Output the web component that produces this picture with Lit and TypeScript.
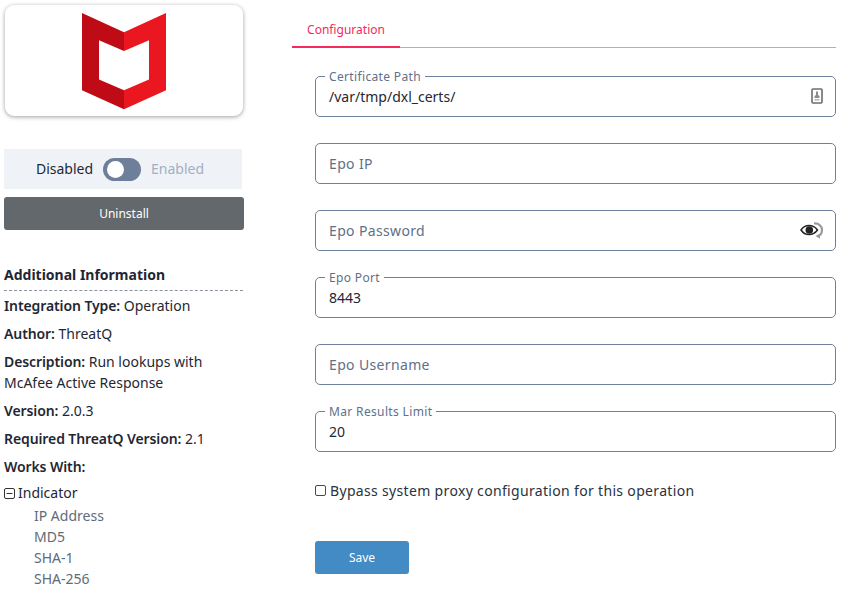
import { LitElement, html, css, nothing } from "lit";
import { customElement } from "lit/decorators.js";

interface Field { label: string; value?: string; icon?: "file" | "eye"; }

const FIELDS: Field[] = [
  { label: "Certificate Path", value: "/var/tmp/dxl_certs/", icon: "file" },
  { label: "Epo IP" },
  { label: "Epo Password", icon: "eye" },
  { label: "Epo Port", value: "8443" },
  { label: "Epo Username" },
  { label: "Mar Results Limit", value: "20" },
];

@customElement("app-root")
export class AppRoot extends LitElement {
  static styles = css`
    :host {
      display: block; width: 846px; height: 593px; overflow: hidden; background: #fff;
      font-family: "Noto Sans", "Open Sans", sans-serif; color: #1f2733;
    }
    .page { display: flex; align-items: flex-start; padding: 5px 10px 0 4px; }
    .left { width: 240px; flex: none; }
    .right { width: 544px; flex: none; margin-left: 48px; }

    .card {
      margin-left: 1px; width: 238px; height: 111px; box-sizing: border-box; background: #fff;
      border-radius: 9px; box-shadow: 0 1px 4px rgba(0,0,0,.38);
      display: flex; align-items: center; justify-content: center; padding-top: 2px;
    }
    .card svg { display: block; }

    .toggle-row {
      margin-top: 33px; width: 238px; height: 40px; background: #eff3f8; box-sizing: border-box;
      display: flex; align-items: center; justify-content: center; gap: 10px;
      font-size: 14px; padding: 0 6px 2px 0;
    }
    .toggle-row .on { color: #a3aec2; }
    .switch { width: 38px; height: 23px; border-radius: 12px; background: #6e7f99; display: flex; align-items: center; padding-left: 4px; box-sizing: border-box; margin-top: 2px; }
    .knob { width: 17px; height: 17px; border-radius: 50%; background: #fff; }
    .uninstall {
      margin-top: 8px; height: 33px; border-radius: 3px; background: #62686b; color: #fff;
      display: flex; align-items: center; justify-content: center; font-size: 12px;
    }

    .info { margin-top: 34px; font-size: 14px; line-height: 21px; color: #1f2733; }
    .info h3 {
      margin: 0; font-size: 14px; font-weight: 700; line-height: 21px; padding-bottom: 5px;
      border-bottom: 1px dashed #8c939c; margin-right: 1px;
    }
    .info p { margin: 0; padding-top: 7px; }
    .info h3 + p { padding-top: 4px; }
    .info b { font-weight: 600; letter-spacing: -.1px; }
    .tree-head { display: flex; align-items: center; gap: 3px; margin-top: 5px; height: 21px; }
    .tree-head svg { display: block; margin-top: 2px; }
    .tree { list-style: none; margin: 2px 0 0; padding: 0 0 0 30px; color: #5f6b7a; }

    .tabs { height: 42px; border-bottom: 1px solid #aab2c0; display: flex; align-items: flex-end; }
    .tab {
      width: 108px; height: 27px; box-sizing: border-box; margin-bottom: -1px;
      border-bottom: 2px solid #f5295a; color: #f5295a; font-size: 12px;
      display: flex; justify-content: center;
    }

    form { margin: 28px 0 0 23px; display: flex; flex-direction: column; gap: 26px; }
    .field {
      position: relative; height: 41px; box-sizing: border-box; border: 1px solid #6e7f99; border-radius: 5px;
      display: flex; align-items: center; padding: 0 11px 0 13px; font-size: 14px; color: #1f2733;
    }
    .field .val { flex: 1; }
    .field .ph { flex: 1; color: #5f708a; letter-spacing: .35px; }
    .field.filled { align-items: flex-start; padding-top: 10px; }
    .legend {
      position: absolute; left: 9px; top: -8px; padding: 0 4px; background: #fff;
      font-size: 12px; line-height: 16px; letter-spacing: .35px; color: #5f708a;
    }
    .field svg { display: block; flex: none; }
    .field.filled svg { margin-top: 1px; }

    .check { margin: 29px 0 0 23px; height: 18px; display: flex; align-items: center; gap: 4px; font-size: 14px; letter-spacing: .33px; color: #2a323d; }
    .box { width: 9px; height: 9px; border: 1px solid #3e4a5c; border-radius: 2px; margin-top: 1px; }
    .save {
      margin: 42px 0 0 23px; width: 94px; height: 33px; border-radius: 3px; background: #428bc5; color: #fff;
      display: flex; align-items: center; justify-content: center; font-size: 12px;
    }
  `;

  private fileIcon() {
    return html`<svg width="13" height="16" viewBox="0 0 13 16">
      <rect x="1" y="1" width="10" height="14" fill="#fff" stroke="#6d6d6d" stroke-width="1.6" rx="1"></rect>
      <path d="M5 3.500h2V7l1.500 1v2h-5V8L5 7z" fill="#8b8b8b"></path>
      <rect x="3.500" y="11" width="5" height="1.500" fill="#b5b5b5"></rect>
    </svg>`;
  }

  private eyeIcon() {
    return html`<svg width="24" height="17" viewBox="0 0 24 17">
      <path d="M14 1.500c4.500-.5 8 2.500 8 6.500 0 3-1.500 5-3.500 6" fill="none" stroke="#9a9a9a" stroke-width="2.200"></path>
      <path d="M15.500 14l4.500 2.800v-5z" fill="#9a9a9a"></path>
      <path d="M1 8c4-6 12-6 16.500 0C13 14 5 14 1 8z" fill="#fff" stroke="#222" stroke-width="1.500"></path>
      <circle cx="9.300" cy="8" r="3.800" fill="#222"></circle>
    </svg>`;
  }

  private renderField(f: Field) {
    const icon = f.icon === "file" ? this.fileIcon() : f.icon === "eye" ? this.eyeIcon() : nothing;
    if (f.value) {
      return html`<div class="field filled">
        <span class="legend">${f.label}</span>
        <span class="val">${f.value}</span>${icon}
      </div>`;
    }
    return html`<div class="field"><span class="ph">${f.label}</span>${icon}</div>`;
  }

  render() {
    return html`<div class="page">
      <aside class="left">
        <div class="card">
          <svg width="84" height="97" viewBox="0 0 84 97">
            <path d="M0 0L42 19.300V38L17 27.300V66.600L42 77.300V96.300L0 77.300z" fill="#bf0b16"></path>
            <path d="M84 0L42 19.300V38L67 27.300V66.600L42 77.300V96.300L84 77.300z" fill="#ea1620"></path>
          </svg>
        </div>
        <div class="toggle-row">
          <span>Disabled</span>
          <div class="switch"><div class="knob"></div></div>
          <span class="on">Enabled</span>
        </div>
        <div class="uninstall">Uninstall</div>
        <section class="info">
          <h3>Additional Information</h3>
          <p><b>Integration Type:</b> Operation</p>
          <p><b>Author:</b> ThreatQ</p>
          <p><b>Description:</b> Run lookups with McAfee Active Response</p>
          <p><b>Version:</b> 2.0.3</p>
          <p><b>Required ThreatQ Version:</b> 2.1</p>
          <p><b>Works With:</b></p>
          <div class="tree-head">
            <svg width="11" height="11" viewBox="0 0 11 11">
              <rect x=".5" y=".5" width="10" height="10" rx="1.500" fill="none" stroke="#333"></rect>
              <path d="M2.500 5.500h6" stroke="#333"></path>
            </svg>
            <span>Indicator</span>
          </div>
          <ul class="tree">
            <li>IP Address</li><li>MD5</li><li>SHA-1</li><li>SHA-256</li>
          </ul>
        </section>
      </aside>
      <main class="right">
        <div class="tabs"><div class="tab">Configuration</div></div>
        <form>${FIELDS.map((f) => this.renderField(f))}</form>
        <div class="check"><span class="box"></span><span>Bypass system proxy configuration for this operation</span></div>
        <div class="save">Save</div>
      </main>
    </div>`;
  }
}
